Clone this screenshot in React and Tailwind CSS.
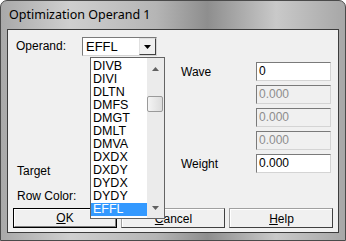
import React from 'react';

const items = ['DIVB', 'DIVI', 'DLTN', 'DMFS', 'DMGT', 'DMLT', 'DMVA', 'DXDX', 'DXDY', 'DYDX', 'DYDY', 'EFFL'];

const Field = ({ value, disabled }) => (
  <div
    className={`h-[19px] w-[75px] border border-t-[#7a7a7a] border-l-[#7a7a7a] border-r-[#d4d4d4] border-b-[#d4d4d4] pl-[2px] text-[12px] leading-[17px] ${
      disabled ? 'bg-[#f0f0f0] text-[#8d8d8d]' : 'bg-white text-black'
    }`}
  >
    {value}
  </div>
);

const Button = ({ children, primary }) => (
  <div
    className={`flex h-[20px] flex-1 items-center justify-center border text-[12px] ${
      primary ? 'border-black' : 'border-[#a0a0a0] border-r-[#404040] border-b-[#404040]'
    } bg-[#f0f0f0]`}
  >
    <div className={`flex h-full w-full items-center justify-center ${primary ? 'border border-white border-r-[#808080] border-b-[#808080]' : 'border-t border-l border-white'}`}>
      {children}
    </div>
  </div>
);

export default function App() {
  return (
    <div
      className="relative h-[241px] w-[346px] overflow-hidden rounded-t-[7px] border border-[#4a4a4a] bg-[linear-gradient(90deg,#a9a9a9_0%,#cfcfcf_20%,#b5b5b5_45%,#8e8e8e_60%,#c9c9c9_80%,#a7a7a7_100%)] px-[6px] pb-[6px]"
      style={{ fontFamily: '"Liberation Sans", Arial, sans-serif' }}
    >
      <div className="flex h-[28px] items-center pl-[2px] text-[12.5px] text-black" style={{ fontFamily: '"Noto Sans", "Liberation Sans", sans-serif' }}>
        Optimization Operand 1
      </div>
      <div className="relative h-[204px] border border-[#3c3c3c] bg-[#f0f0f0] text-[12px] text-black">
        <div className="flex h-[172px]">
          <div className="w-[164px] pt-[7px]">
            <div className="flex">
              <div className="w-[74px] pl-[8px] pt-[1px] leading-[17px]">Operand:</div>
              <div className="flex h-[19px] w-[75px] border border-t-[#7a7a7a] border-l-[#7a7a7a] border-r-[#d4d4d4] border-b-[#d4d4d4] bg-white">
                <div className="flex-1 pl-[3px] text-[13px] leading-[17px]">EFFL</div>
                <div className="flex w-[17px] items-center justify-center border border-[#e0e0e0] border-r-[#404040] border-b-[#404040] bg-[#f0f0f0]">
                  <svg width="7" height="4" viewBox="0 0 7 4"><path d="M0 0h7L3.5 4z" fill="#000" /></svg>
                </div>
              </div>
            </div>
            <div className="mt-[108px] pl-[9px] leading-[15px]">Target</div>
            <div className="mt-[10px] pl-[9px] leading-[15px]">Row Color:</div>
          </div>
          <div className="flex flex-col gap-[4px] pt-[32px]">
            {[
              ['Wave', '0', false],
              ['', '0.000', true],
              ['', '0.000', true],
              ['', '0.000', true],
              ['Weight', '0.000', false],
            ].map(([label, value, disabled], i) => (
              <div key={i} className="flex items-center">
                <div className="w-[84px] pl-[9px]">{label}</div>
                <Field value={value} disabled={disabled} />
              </div>
            ))}
          </div>
        </div>
        <div className="mt-[6px] flex gap-[4px] px-[5px]">
          <Button primary>
            <span className="underline">O</span>K
          </Button>
          <Button>
            <span className="underline">C</span>ancel
          </Button>
          <Button>
            <span className="underline">H</span>elp
          </Button>
        </div>

        <div className="absolute left-[82px] top-[27px] flex h-[162px] w-[75px] border border-[#646464] bg-white">
          <div className="flex-1 pt-[2px]">
            {items.map((it) => (
              <div
                key={it}
                className={`h-[13px] overflow-hidden pl-[2px] text-[12.5px] leading-[13px] ${it === 'EFFL' ? 'bg-[#3399ff] text-white' : ''}`}
              >
                {it}
              </div>
            ))}
          </div>
          <div className="relative w-[17px] bg-[#ebebeb]">
            <svg className="absolute left-[5px] top-[9px]" width="7" height="4" viewBox="0 0 7 4"><path d="M3.5 0L7 4H0z" fill="#606060" /></svg>
            <div className="absolute left-[0px] top-[38px] h-[16px] w-[16px] rounded-[2px] border border-[#9a9a9a] bg-[linear-gradient(90deg,#f4f4f4,#dcdcdc)]" />
            <svg className="absolute bottom-[8px] left-[5px]" width="7" height="4" viewBox="0 0 7 4"><path d="M0 0h7L3.5 4z" fill="#606060" /></svg>
          </div>
        </div>
      </div>
    </div>
  );
}
